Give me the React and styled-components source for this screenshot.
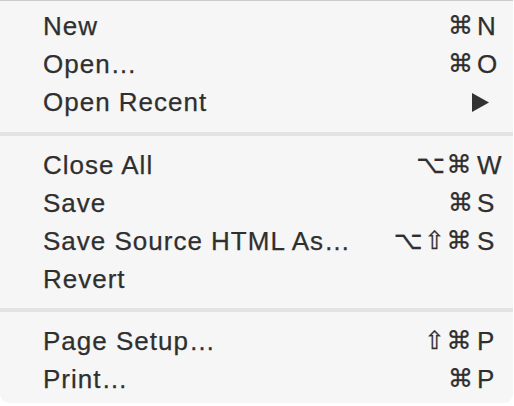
import React from "react";
import styled, { createGlobalStyle } from "styled-components";

const GlobalStyle = createGlobalStyle`
  body {
    margin: 0;
    background: #ffffff;
  }
`;

const Menu = styled.div`
  width: 513px;
  box-sizing: border-box;
  background: #f6f6f6;
  border-top: 1px solid #cbcbcb;
  border-radius: 0 0 9px 9px;
  padding: 6px 0 5px;
  font-family: "Liberation Sans", Arial, sans-serif;
  font-size: 26px;
  color: #2f2f2f;
  -webkit-text-stroke: 0.25px #2f2f2f;
`;

const Separator = styled.div`
  height: 4px;
  background: #e3e3e3;
  margin: ${(p) => (p.$first ? "11px 0 10px" : "10px 0")};
`;

const Row = styled.div`
  display: grid;
  grid-template-columns: 1fr auto 37px;
  align-items: center;
  height: 38px;
  line-height: 38px;
  padding-left: 43px;
`;

const Label = styled.span`
  letter-spacing: 1px;
  white-space: nowrap;
`;

const Mods = styled.span`
  font-family: "DejaVu Sans", sans-serif;
  font-size: 25px;
  text-align: right;
  padding-right: 3px;
  letter-spacing: ${(p) => (p.$spaced ? "1.5px" : "0")};
`;

const Key = styled.span`
  padding-left: 1px;
`;

const Arrow = styled.svg`
  display: block;
  width: 17px;
  height: 19px;
  margin-left: -4px;
`;

const sections = [
  [
    { label: "New", mods: "⌘", key: "N" },
    { label: "Open…", mods: "⌘", key: "O" },
    { label: "Open Recent", submenu: true },
  ],
  [
    { label: "Close All", mods: "⌥⌘", key: "W" },
    { label: "Save", mods: "⌘", key: "S" },
    { label: "Save Source HTML As…", mods: "⌥⇧⌘", key: "S" },
    { label: "Revert" },
  ],
  [
    { label: "Page Setup…", mods: "⇧⌘", key: "P" },
    { label: "Print…", mods: "⌘", key: "P" },
  ],
];

const App = () => {
  return (
    <>
      <GlobalStyle />
      <Menu>
        {sections.map((items, i) => (
          <React.Fragment key={i}>
            {i > 0 && <Separator $first={i === 1} />}
            {items.map((item) => (
              <Row key={item.label}>
                <Label>{item.label}</Label>
                <Mods $spaced={item.mods && item.mods.length > 1}>
                  {item.mods || ""}
                </Mods>
                {item.submenu ? (
                  <Arrow viewBox="0 0 17 19">
                    <polygon points="0,0 17,9.5 0,19" fill="#333333" />
                  </Arrow>
                ) : (
                  <Key>{item.key || ""}</Key>
                )}
              </Row>
            ))}
          </React.Fragment>
        ))}
      </Menu>
    </>
  );
};

export default App;
